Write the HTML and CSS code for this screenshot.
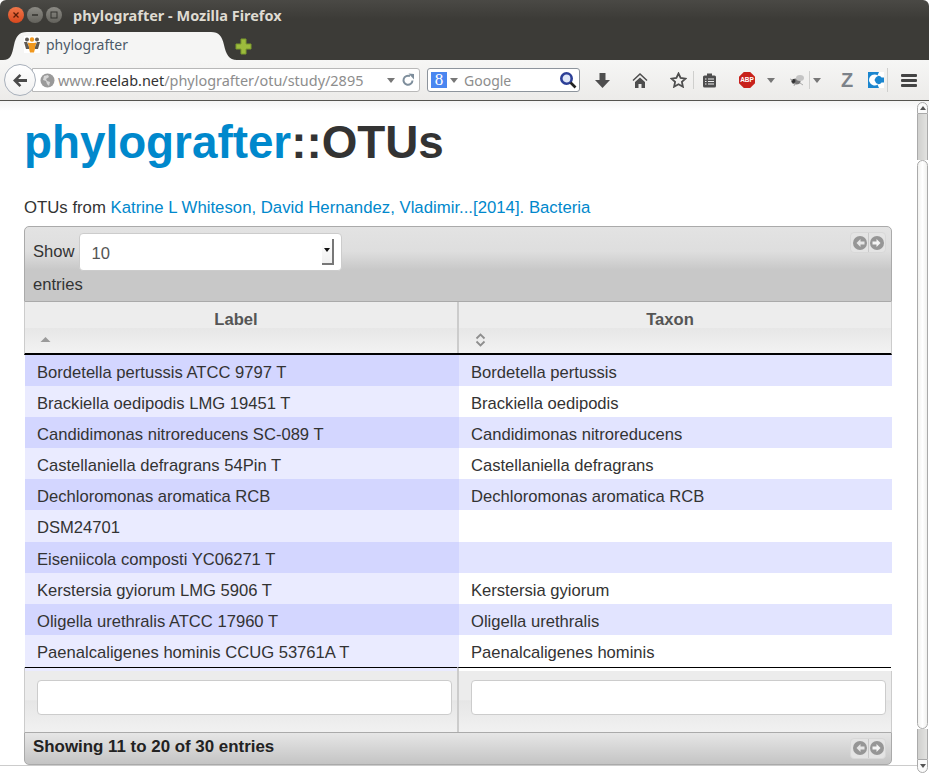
FILE: index.html
```html
<!DOCTYPE html>
<html lang="en">
<head>
    <meta charset="UTF-8">
    <meta name="viewport" content="width=device-width, initial-scale=1.0">
    <title>phylografter</title>
    <link rel="stylesheet" href="styles.css">
</head>
<body>
<div class="window">
    <div class="titlebar">
        <div class="winbuttons">
            <span class="winbtn close"><svg width="8" height="8" viewBox="0 0 8 8"><path d="M1.500 1.500l5 5M6.500 1.500l-5 5" stroke="#5c1d08" stroke-width="1.300"/></svg></span>
            <span class="winbtn"><svg width="8" height="8" viewBox="0 0 8 8"><path d="M1 4h6" stroke="#33322e" stroke-width="1.500"/></svg></span>
            <span class="winbtn"><svg width="8" height="8" viewBox="0 0 8 8"><rect x="1" y="1" width="6" height="6" fill="none" stroke="#33322e"/></svg></span>
        </div>
        <span class="wintitle">phylografter - Mozilla Firefox</span>
    </div>
    <div class="tabbar">
        <div class="tab">
            <svg class="tabshape" width="234" height="28" viewBox="0 0 234 28"><path d="M0 28C8 28 9 22 11 13 13 4 16 0 24 0H208C216 0 219 4 221 13 223 22 226 28 234 28Z" fill="#f5f5f4"/></svg>
            <svg class="favicon" width="16" height="17" viewBox="0 0 16 17"><rect width="16" height="17" fill="#fff"/><path d="M3.500 6.500L6 7h4l2.500-.5L11 11v1.500l-1 4H6l-1-4V11z" fill="#f0981e"/><circle cx="8" cy="3.500" r="2.200" fill="#f0981e"/><circle cx="3" cy="3.500" r="2" fill="#5f5a54"/><circle cx="13" cy="3.500" r="2" fill="#5f5a54"/><path d="M0 6h3l2 5v2H2zM16 6h-3l-2 5v2h3z" fill="#5f5a54"/></svg>
            <span class="tabtitle">phylografter</span>
        </div>
        <svg class="newtab" width="17" height="17" viewBox="0 0 17 17"><path d="M6 1h5v5h5v5h-5v5H6v-5H1V6h5z" fill="#9dbb3d" stroke="#7b9a2c"/></svg>
    </div>
    <div class="navbar">
        <div class="urlgroup">
            <span class="backbtn"><svg width="14" height="13" viewBox="0 0 14 13"><path d="M6.500 0L0 6.500 6.500 13l1.800-1.800L5.100 8H14V5H5.100l3.200-3.200z" fill="#4a4a4a"/></svg></span>
            <div class="urlbar">
                <svg class="globe" width="15" height="15" viewBox="0 0 15 15"><circle cx="7.500" cy="7.500" r="7" fill="#9a9a9a"/><path d="M4 3l4-1 1 2-3 2 1 2 3 1-1 4-2-2-1-3-3-1z" fill="#d6d6d6"/></svg>
                <span class="url">www.<b>reelab.net</b>/phylografter/otu/study/2895</span>
                <span class="caret urlcaret"></span>
                <svg class="reload" width="14" height="14" viewBox="0 0 14 14"><path d="M11.500 7.500A4.500 4.500 0 1 1 9 3.200" fill="none" stroke="#7e8e9c" stroke-width="2"/><path d="M7.500 0.500L13 1v5.500z" fill="#7e8e9c"/></svg>
            </div>
        </div>
        <div class="searchbar">
            <span class="glogo">8</span>
            <span class="caret"></span>
            <span class="searchtext">Google</span>
            <svg class="lens" width="18" height="18" viewBox="0 0 18 18"><circle cx="7.500" cy="7.500" r="5.200" fill="#dfe7f7" stroke="#2c3f97" stroke-width="2.600"/><path d="M11.500 11.500l5 5" stroke="#222" stroke-width="2.600"/></svg>
        </div>
        <div class="tools">
            <svg class="ti-down" width="15" height="15" viewBox="0 0 15 15"><path d="M4.500 0h6v7H15l-7.500 8L0 7h4.500z" fill="#4e4e4e"/></svg>
            <svg class="ti-home" width="16" height="15" viewBox="0 0 16 15"><path d="M8 0L.5 7l1 1L8 2l6.500 6 1-1z" fill="#4e4e4e"/><path d="M3 9l5-4.500L13 9v6H9.500v-4h-3v4H3z" fill="#4e4e4e"/></svg>
            <svg class="ti-star" width="17" height="16" viewBox="0 0 17 16"><path d="M8.500 1.500l2.100 4.500 4.900.6-3.600 3.300 1 4.800-4.400-2.400-4.400 2.400 1-4.800L1.500 6.600l4.900-.6z" fill="none" stroke="#4e4e4e" stroke-width="1.800"/></svg>
            <span class="tsep"></span>
            <svg class="ti-list" width="15" height="15" viewBox="0 0 15 15"><rect x="1" y="2.500" width="13" height="12" rx="1.500" fill="#4e4e4e"/><rect x="5" y="0.500" width="5" height="3" fill="#4e4e4e"/><path d="M3 6h1.500M6 6h6M3 8.500h1.500M6 8.500h6M3 11h1.500M6 11h6" stroke="#eee" stroke-width="1.100"/></svg>
            <span class="abp">ABP</span>
            <span class="caret abpcaret"></span>
            <svg class="ti-bug" width="17" height="14" viewBox="0 0 17 14"><ellipse cx="7" cy="8.500" rx="4.500" ry="3" fill="#777"/><ellipse cx="11" cy="5" rx="4" ry="3" fill="#c4c4c4"/><circle cx="4.500" cy="8" r="2" fill="#333"/><path d="M1 6l3 1M5 13l1-3M11 10l3 2" stroke="#aaa"/></svg>
            <span class="tsep short"></span>
            <span class="caret bugcaret"></span>
            <span class="zlogo">Z</span>
            <svg class="ti-c" width="16" height="16" viewBox="0 0 16 16"><rect width="16" height="16" fill="#1b86cf"/><path d="M6.500 2.500a5.500 5.500 0 1 0 3.500 9.800A7 7 0 0 1 6.500 8 7 7 0 0 1 10 3.700a5.500 5.500 0 0 0-3.500-1.200z" fill="#fff"/><path d="M11 0h5v5.500h-2.500A3 3 0 0 0 9 4.500zM11 16h5v-5.500h-2.500A3 3 0 0 1 9 11.500z" fill="#fff"/></svg>
            <span class="tsep end"></span>
            <span class="menu"><i></i><i></i><i></i></span>
        </div>
    </div>
    <div class="viewport">
        <div class="page">
            <h1><span class="brand">phylografter</span>::OTUs</h1>
            <p class="byline">OTUs from <a href="#">Katrine L Whiteson, David Hernandez, Vladimir...[2014]. Bacteria</a></p>
            <div class="datatable">
                <div class="toolbar top">
                    <div class="lengthbox">
                        <label class="showlabel">Show</label>
                        <div class="selectbox">
                            <span>10</span>
                            <span class="selectarrow"></span>
                        </div>
                    </div>
                    <div class="entrieslabel">entries</div>
                    <div class="pager">
                        <span class="pagebtn"><svg width="14" height="14" viewBox="0 0 14 14"><circle cx="7" cy="7" r="7" fill="#969696"/><path d="M7.500 3L3.500 7l4 4V8.500h4v-3h-4z" fill="#e6e6e6"/></svg></span>
                        <span class="pagebtn"><svg width="14" height="14" viewBox="0 0 14 14"><circle cx="7" cy="7" r="7" fill="#969696"/><path d="M6.500 3l4 4-4 4V8.500h-4v-3h4z" fill="#f4f4f4"/></svg></span>
                    </div>
                </div>
                <div class="tablehead">
                    <div class="headcell">
                        <div class="headlabel">Label</div>
                        <svg class="sorticon" width="11" height="7" viewBox="0 0 11 7"><path d="M5.500 1L10.500 6H.5z" fill="#9a9a9a"/></svg>
                    </div>
                    <div class="headcell">
                        <div class="headlabel">Taxon</div>
                        <svg class="sorticon both" width="11" height="14" viewBox="0 0 11 14"><path d="M1.500 5.500l4-4 4 4M1.500 8.500l4 4 4-4" fill="none" stroke="#8e8e8e" stroke-width="1.800"/></svg>
                    </div>
                </div>
                <div class="tablebody">
                    <div class="row odd"><div class="cell">Bordetella pertussis ATCC 9797 T</div><div class="cell">Bordetella pertussis</div></div>
                    <div class="row even"><div class="cell">Brackiella oedipodis LMG 19451 T</div><div class="cell">Brackiella oedipodis</div></div>
                    <div class="row odd"><div class="cell">Candidimonas nitroreducens SC-089 T</div><div class="cell">Candidimonas nitroreducens</div></div>
                    <div class="row even"><div class="cell">Castellaniella defragrans 54Pin T</div><div class="cell">Castellaniella defragrans</div></div>
                    <div class="row odd"><div class="cell">Dechloromonas aromatica RCB</div><div class="cell">Dechloromonas aromatica RCB</div></div>
                    <div class="row even"><div class="cell">DSM24701</div><div class="cell"></div></div>
                    <div class="row odd"><div class="cell">Eiseniicola composti YC06271 T</div><div class="cell"></div></div>
                    <div class="row even"><div class="cell">Kerstersia gyiorum LMG 5906 T</div><div class="cell">Kerstersia gyiorum</div></div>
                    <div class="row odd"><div class="cell">Oligella urethralis ATCC 17960 T</div><div class="cell">Oligella urethralis</div></div>
                    <div class="row even"><div class="cell">Paenalcaligenes hominis CCUG 53761A T</div><div class="cell">Paenalcaligenes hominis</div></div>
                </div>
                <div class="tablefoot">
                    <div class="footcell"><input type="text" class="filter"></div>
                    <div class="footcell"><input type="text" class="filter"></div>
                </div>
                <div class="toolbar bottom">
                    <span class="info">Showing 11 to 20 of 30 entries</span>
                    <div class="pager">
                        <span class="pagebtn"><svg width="14" height="14" viewBox="0 0 14 14"><circle cx="7" cy="7" r="7" fill="#969696"/><path d="M7.500 3L3.500 7l4 4V8.500h4v-3h-4z" fill="#e6e6e6"/></svg></span>
                        <span class="pagebtn"><svg width="14" height="14" viewBox="0 0 14 14"><circle cx="7" cy="7" r="7" fill="#969696"/><path d="M6.500 3l4 4-4 4V8.500h-4v-3h4z" fill="#f4f4f4"/></svg></span>
                    </div>
                </div>
            </div>
        </div>
        <div class="scrollbar">
            <div class="sb-btn"><span class="sb-up"></span></div>
            <div class="sb-track"></div>
            <div class="sb-thumb"></div>
            <div class="sb-track low"></div>
            <div class="sb-btn down"><span class="sb-down"></span></div>
        </div>
    </div>
</div>
</body>
</html>
```

FILE: styles.css
```css
* {
    box-sizing: border-box;
}

html,
body {
    margin: 0;
    padding: 0;
    height: 773px;
    overflow: hidden;
    background-color: #fff;
    font-family: "Liberation Sans", Arial, sans-serif;
}

.window {
    display: flex;
    flex-direction: column;
    height: 773px;
}

/* browser chrome */
.titlebar {
    display: flex;
    align-items: center;
    height: 32px;
    flex: none;
    padding: 0 0 2px 8px;
    background: linear-gradient(#4a4945, #3c3b37 60%);
    border-radius: 6px 6px 0 0;
}

.winbuttons {
    display: flex;
    gap: 3px;
}

.winbtn {
    display: flex;
    align-items: center;
    justify-content: center;
    width: 16px;
    height: 16px;
    border-radius: 50%;
    background: linear-gradient(#8b8a84, #63625c);
}

.winbtn.close {
    background: linear-gradient(#f0774a, #d8481e);
}

.wintitle {
    margin-left: 11px;
    color: #dfdbd2;
    font-family: "Noto Sans", "Liberation Sans", sans-serif;
    font-size: 14.500px;
    font-weight: 700;
}

.tabbar {
    display: flex;
    align-items: flex-end;
    height: 28px;
    flex: none;
    padding-left: 3px;
    background-color: #3c3b37;
}

.tab {
    display: flex;
    position: relative;
    align-items: center;
    gap: 6px;
    width: 232px;
    height: 28px;
    padding: 0 0 3px 21px;
    color: #4c5a68;
    font-family: "Noto Sans", "Liberation Sans", sans-serif;
    font-size: 14px;
}

.tabshape {
    position: absolute;
    top: 0;
    left: 0;
}

.favicon,
.tabtitle {
    position: relative;
}

.newtab {
    margin: 0 0 5px 0;
}

.navbar {
    display: flex;
    align-items: center;
    height: 41px;
    flex: none;
    padding: 0 0 0 4px;
    background: linear-gradient(#f6f6f5, #ecebe9);
    border-bottom: 1px solid #55544f;
}

.urlgroup {
    display: flex;
    align-items: center;
    width: 416px;
    flex: none;
}

.backbtn {
    display: flex;
    align-items: center;
    justify-content: center;
    width: 32px;
    height: 32px;
    flex: none;
    position: relative;
    z-index: 1;
    background: linear-gradient(#fff, #f0f0f0);
    border: 1px solid #a8b0bb;
    border-radius: 50%;
}

.urlbar {
    display: flex;
    align-items: center;
    width: 388px;
    height: 24px;
    margin-left: -4px;
    padding-left: 7px;
    background-color: #fff;
    border: 1px solid #b8b8b8;
    border-radius: 0 3px 3px 0;
}

.url {
    margin-left: 3px;
    color: #8d8d8d;
    font-family: "Noto Sans", "Liberation Sans", sans-serif;
    font-size: 14.450px;
    white-space: nowrap;
}

.url b {
    color: #333;
    font-weight: 400;
}

.caret {
    display: inline-block;
    flex: none;
    width: 0;
    height: 0;
    border-left: 4px solid transparent;
    border-right: 4px solid transparent;
    border-top: 5px solid #777;
}

.urlcaret {
    margin-left: 24px;
}

.reload {
    margin-left: 6px;
}

.searchbar {
    display: flex;
    align-items: center;
    width: 153px;
    height: 24px;
    margin-left: 7px;
    flex: none;
    padding: 0 2px 0 3px;
    background-color: #fff;
    border: 1px solid #8d949c;
    border-radius: 3px;
}

.glogo {
    width: 16px;
    height: 16px;
    color: #fff;
    font-family: "Liberation Serif", serif;
    font-size: 17px;
    line-height: 16px;
    text-align: center;
    background-color: #4a86f0;
}

.searchbar .caret {
    margin-left: 3px;
}

.searchtext {
    margin-left: 6px;
    color: #8d8d8d;
    font-family: "Noto Sans", "Liberation Sans", sans-serif;
    font-size: 14px;
    flex: 1;
}

.tools {
    display: flex;
    align-items: center;
    flex: 1;
    height: 100%;
}

.ti-down {
    margin-left: 15px;
}

.ti-home {
    margin-left: 22px;
}

.ti-star {
    margin-left: 22px;
}

.tsep {
    width: 1px;
    height: 18px;
    margin-left: 6px;
    background-color: #cfcfcd;
}

.ti-list {
    margin-left: 8px;
}

.abp {
    width: 16px;
    height: 16px;
    margin-left: 22px;
    color: #fff;
    font-size: 6.500px;
    font-weight: 700;
    line-height: 16px;
    text-align: center;
    background-color: #c8221c;
    clip-path: polygon(30% 0, 70% 0, 100% 30%, 100% 70%, 70% 100%, 30% 100%, 0 70%, 0 30%);
}

.abpcaret {
    margin-left: 12px;
}

.ti-bug {
    margin-left: 14px;
}

.tsep.short {
    margin-left: 3px;
}

.bugcaret {
    margin-left: 3px;
}

.zlogo {
    width: 14px;
    margin-left: 19px;
    color: #7c8289;
    font-size: 20px;
    font-weight: 700;
    line-height: 16px;
    text-align: center;
}

.ti-c {
    margin-left: 14px;
}

.tsep.end {
    margin-left: 3px;
    height: 24px;
}

.menu {
    display: flex;
    flex-direction: column;
    gap: 2px;
    width: 16px;
    margin-left: 13px;
}

.menu i {
    display: block;
    height: 3px;
    background-color: #444;
    border-radius: 1px;
}

/* page */
.viewport {
    display: flex;
    flex: 1;
    min-height: 0;
    background: linear-gradient(#f4f4f4, #fff 10px);
}

.page {
    width: 917px;
    height: 665px;
    flex: none;
    padding: 0 24px;
    color: #333;
    border-bottom: 1px solid #ccc;
}

h1 {
    margin: 12px 0 0;
    color: #333;
    font-size: 45.800px;
    font-weight: 700;
    line-height: 60px;
}

.brand {
    color: #0088cc;
}

.byline {
    margin: 25px 0 0;
    font-size: 16.760px;
    line-height: 20px;
}

.byline a {
    color: #0088cc;
    text-decoration: none;
}

.datatable {
    width: 868px;
    margin-top: 8px;
    font-size: 16.600px;
}

.toolbar {
    position: relative;
    border: 1px solid #aaa;
    background: linear-gradient(#e3e3e3, #dedede 33%, #c8c8c8 58%, #c8c8c8);
}

.toolbar.top {
    height: 76px;
    padding: 6px 8px;
    border-radius: 5px 5px 0 0;
}

.toolbar.bottom {
    display: flex;
    align-items: center;
    height: 33px;
    padding: 0 8px 2px;
    border-radius: 0 0 5px 5px;
    background: linear-gradient(#e6e6e6, #c4c4c4);
}

.lengthbox {
    display: flex;
    align-items: center;
}

.showlabel {
    color: #333;
}

.selectbox {
    display: flex;
    align-items: center;
    justify-content: space-between;
    width: 263px;
    height: 38px;
    margin-left: 4px;
    padding: 4px 7px 0 12px;
    color: #555;
    background-color: #fff;
    border: 1px solid #ccc;
    border-radius: 4px;
}

.selectarrow {
    position: relative;
    width: 12px;
    height: 26px;
    margin-top: -4px;
    background: linear-gradient(#fff, #f0f0f0);
    border-right: 2px solid #777;
    border-bottom: 2px solid #777;
}

.selectarrow::after {
    content: "";
    position: absolute;
    top: 9px;
    left: 2px;
    border-left: 3px solid transparent;
    border-right: 3px solid transparent;
    border-top: 4px solid #111;
}

.entrieslabel {
    margin-top: 4px;
    line-height: 20px;
}

.pager {
    display: flex;
    position: absolute;
    top: 5px;
    right: 5px;
    background-color: #e4e4e4;
    border: 1px solid #d8d8d8;
    border-radius: 4px;
}

.pagebtn {
    display: flex;
    width: 17px;
    height: 19px;
    align-items: center;
    justify-content: center;
}

.pagebtn + .pagebtn {
    border-left: 1px solid #c9c9c9;
}

.tablehead {
    display: grid;
    grid-template-columns: 432px 434px;
    height: 53px;
    border-left: 1px solid #ccc;
    border-right: 1px solid #ccc;
    border-bottom: 2px solid #000;
}

.headcell {
    display: flex;
    flex-direction: column;
    background: linear-gradient(#ededed 50%, #e7e7e7 52%, #f2f2f2);
}

.headcell + .headcell {
    border-left: 2px solid #ccc;
}

.headlabel {
    height: 29px;
    padding-right: 10px;
    color: #555;
    font-weight: 700;
    line-height: 35px;
    text-align: center;
}

.sorticon {
    margin: 5px 0 0 15px;
}

.sorticon.both {
    margin: 2px 0 0 16px;
}

.tablebody {
    padding-left: 1px;
}

.row {
    display: grid;
    grid-template-columns: 434px 433px;
    height: 31.100px;
    line-height: 36px;
}

.row:last-child {
    height: 32px;
}

.cell {
    padding-left: 12px;
    white-space: nowrap;
}

.row.odd .cell:first-child {
    background-color: #d3d6ff;
}

.row.odd .cell:last-child {
    background-color: #e2e4ff;
}

.row.even .cell:first-child {
    background-color: #eaebff;
}

.row.even .cell:last-child {
    background-color: #fff;
}

.tablefoot {
    display: grid;
    grid-template-columns: 432px 434px;
    height: 65px;
    border-left: 1px solid #ccc;
    border-right: 1px solid #ccc;
    background: linear-gradient(#ececec 50%, #e6e6e6 52%, #f1f1f1);
}

.footcell {
    padding: 12px 5px 0 12px;
    border-top: 1px solid #000;
}

.footcell + .footcell {
    border-left: 2px solid #ccc;
}

.filter {
    display: block;
    width: 100%;
    height: 35px;
    background-color: #fff;
    border: 1px solid #ccc;
    border-radius: 4px;
}

.info {
    color: #222;
    font-size: 16.900px;
    font-weight: 700;
}

/* scrollbar */
.scrollbar {
    display: flex;
    flex-direction: column;
    width: 11px;
    flex: none;
    padding-top: 1px;
}

.sb-btn {
    display: flex;
    justify-content: center;
    align-items: center;
    height: 12px;
    flex: none;
    background-color: #fafafa;
    border: 1px solid #aaa;
    border-radius: 6px 6px 0 0;
}

.sb-btn.down {
    height: 14px;
    border-radius: 0 0 6px 6px;
}

.sb-up {
    border-left: 3px solid transparent;
    border-right: 3px solid transparent;
    border-bottom: 4px solid #555;
}

.sb-down {
    border-left: 3px solid transparent;
    border-right: 3px solid transparent;
    border-top: 4px solid #555;
}

.sb-track {
    height: 46px;
    flex: none;
    background: linear-gradient(90deg, #d0d0ce, #e2e2e0);
    border-left: 1px solid #aaa;
    border-right: 1px solid #aaa;
}

.sb-track.low {
    height: 30px;
}

.sb-thumb {
    flex: 1;
    background: linear-gradient(90deg, #f2f2f0, #fff 50%, #f0f0ee);
    border: 1px solid #aaa;
    border-radius: 6px;
}
```
